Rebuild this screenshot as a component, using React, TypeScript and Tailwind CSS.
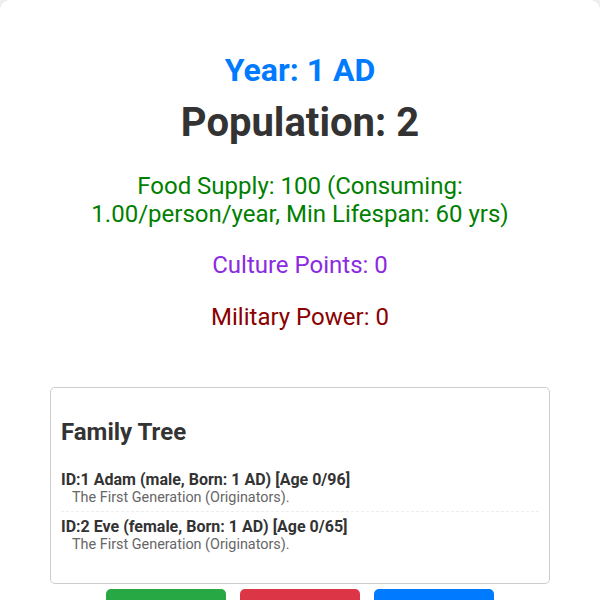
import React from 'react';

const people = [
  { id: 1, name: 'Adam', sex: 'male', born: 1, age: 0, max: 96, note: 'The First Generation (Originators).' },
  { id: 2, name: 'Eve', sex: 'female', born: 1, age: 0, max: 65, note: 'The First Generation (Originators).' },
];

const App: React.FC = () => {
  return (
    <div className="min-h-screen bg-[#f4f4f4] font-['Roboto',sans-serif] text-[#333]">
      <div className="bg-white rounded-[10px] shadow-[0_0_10px_rgba(0,0,0,0.08)] px-[50px] pt-[51px] pb-10 text-center">
        <h2 className="text-[32px] leading-[38px] font-bold text-[#007bff]">Year: 1 AD</h2>
        <h1 className="mt-[10px] text-[40px] leading-[47px] font-bold text-[#333]">Population: 2</h1>

        <p className="mt-[26px] mx-auto max-w-[460px] text-[24px] leading-[28px] text-[#008000]">
          Food Supply: 100 (Consuming: 1.00/person/year, Min Lifespan: 60 yrs)
        </p>
        <p className="mt-[23px] text-[24px] leading-[28px] text-[#8a2be2]">Culture Points: 0</p>
        <p className="mt-[24px] text-[24px] leading-[28px] text-[#8b0000]">Military Power: 0</p>

        <div className="mt-[56px] border border-[#ccc] rounded-[5px] bg-white px-[10px] pt-[30px] pb-[31px] text-left">
          <h3 className="text-[24px] leading-[28px] font-bold text-[#333]">Family Tree</h3>
          <div className="mt-[24px]">
            {people.map((p, i) => (
              <div
                key={p.id}
                className={i < people.length - 1 ? 'pb-[6px] border-b border-dashed border-[#eee]' : 'pt-[5px]'}
              >
                <div className="text-[16px] leading-[20px] font-bold text-[#333]">
                  ID:{p.id} {p.name} ({p.sex}, Born: {p.born} AD) [Age {p.age}/{p.max}]
                </div>
                <div className="pl-[11px] text-[14.4px] leading-[15px] text-[#666]">{p.note}</div>
              </div>
            ))}
          </div>
        </div>

        <div className="mt-[5px] flex justify-center gap-[14px]">
          <button className="w-[120px] h-[48px] pt-[8px] rounded-[5px] bg-[#28a745] text-white text-[16px]">Next Year</button>
          <button className="w-[120px] h-[48px] pt-[8px] rounded-[5px] bg-[#dc3545] text-white text-[16px]">War</button>
          <button className="w-[120px] h-[48px] pt-[8px] rounded-[5px] bg-[#007bff] text-white text-[16px]">Culture</button>
        </div>
      </div>
    </div>
  );
};

export default App;
